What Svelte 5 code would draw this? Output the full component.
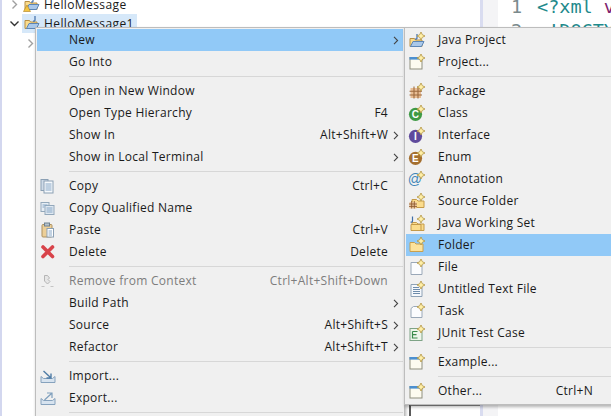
<script>
	const mainMenu = [
		{ label: 'New', arrow: true, active: true },
		{ label: 'Go Into' },
		{ sep: true },
		{ label: 'Open in New Window' },
		{ label: 'Open Type Hierarchy', key: 'F4' },
		{ label: 'Show In', key: 'Alt+Shift+W', arrow: true },
		{ label: 'Show in Local Terminal', arrow: true },
		{ sep: true },
		{ label: 'Copy', key: 'Ctrl+C', icon: 'copy' },
		{ label: 'Copy Qualified Name', icon: 'copyq' },
		{ label: 'Paste', key: 'Ctrl+V', icon: 'paste' },
		{ label: 'Delete', key: 'Delete', icon: 'delete' },
		{ sep: true },
		{ label: 'Remove from Context', key: 'Ctrl+Alt+Shift+Down', icon: 'remove', disabled: true },
		{ label: 'Build Path', arrow: true },
		{ label: 'Source', key: 'Alt+Shift+S', arrow: true },
		{ label: 'Refactor', key: 'Alt+Shift+T', arrow: true },
		{ sep: true },
		{ label: 'Import...', icon: 'import' },
		{ label: 'Export...', icon: 'export' },
		{ sep: true }
	];

	const newMenu = [
		{ label: 'Java Project', icon: 'javaproject' },
		{ label: 'Project...', icon: 'window' },
		{ sep: true },
		{ label: 'Package', icon: 'package' },
		{ label: 'Class', icon: 'class' },
		{ label: 'Interface', icon: 'interface' },
		{ label: 'Enum', icon: 'enum' },
		{ label: 'Annotation', icon: 'annotation' },
		{ label: 'Source Folder', icon: 'srcfolder' },
		{ label: 'Java Working Set', icon: 'workingset' },
		{ label: 'Folder', icon: 'folder', active: true },
		{ label: 'File', icon: 'file' },
		{ label: 'Untitled Text File', icon: 'text' },
		{ label: 'Task', icon: 'task' },
		{ label: 'JUnit Test Case', icon: 'junit' },
		{ sep: true },
		{ label: 'Example...', icon: 'window' },
		{ sep: true },
		{ label: 'Other...', key: 'Ctrl+N', icon: 'window' }
	];
</script>

{#snippet star()}
	<polygon points="12.5,0 13.8,2.7 16.5,4 13.8,5.3 12.5,8 11.2,5.3 8.5,4 11.2,2.7" fill="#fff0a8" stroke="#b3933f" stroke-width="0.8" />
{/snippet}

{#snippet folderShape(x, y)}
	<path d="M{x + 0.5} {y + 9.5} V{y + 1.5} H{x + 5} L{x + 6.5} {y + 3} H{x + 12.5} V{y + 9.5} Z" fill="#fbdc8c" stroke="#c49a4a" />
{/snippet}

{#snippet icon(name)}
	<svg class="ico" width="18" height="16" viewBox="0 0 17 16">
		{#if name === 'copy'}
			<rect x="1.5" y="1.5" width="7" height="11" fill="#cfdbe8" stroke="#8ba0b4" />
			<rect x="4.5" y="3" width="9" height="12" fill="#f6f9fc" stroke="#8ba0b4" />
			<path d="M6 6h6M6 8h6M6 10h6M6 12h6" stroke="#86a6c6" />
		{:else if name === 'copyq'}
			<rect x="1.5" y="2.5" width="8" height="9" fill="#e6edf4" stroke="#93a8bb" />
			<rect x="5.5" y="5.5" width="9" height="9" fill="#dfe8f1" stroke="#93a8bb" />
			<path d="M3 5h5M3 7h2M7 8h6M7 10h6M7 12h6" stroke="#86a6c6" />
		{:else if name === 'paste'}
			<rect x="2.5" y="2.5" width="10" height="12.5" rx="1" fill="#eccf98" stroke="#ad9160" />
			<rect x="5" y="1" width="5" height="3" fill="#b7c3cc" stroke="#6f8190" />
			<rect x="7.5" y="6.5" width="6.5" height="8.5" fill="#fff" stroke="#8ba0b4" />
			<path d="M9 9h3.5M9 11h3.5M9 13h3.5" stroke="#86a6c6" />
		{:else if name === 'delete'}
			<path d="M3.5 3 L13 12.5 M13 3 L3.5 12.5" stroke="#d8434a" stroke-width="3.6" stroke-linecap="round" />
		{:else if name === 'remove'}
			<path d="M5 2.5h3l2 2.5-1.5 1.5 2 2-2.5 2.5-3-3z" fill="#e6e6e6" stroke="#b5b5b5" />
			<path d="M2 13.5h3M11 13.5h3" stroke="#c4c4c4" />
		{:else if name === 'import' || name === 'export'}
			<path d="M1.5 8.5 V14.5 H15.5 V8.5 L13 10.5 H4 Z" fill="#d7e3ef" stroke="#86a2bd" />
			{#if name === 'import'}
				<path d="M4 3 L11 9.5 M11.5 5.5 V10 H7" fill="none" stroke="#4f7ca6" stroke-width="1.4" />
			{:else}
				<path d="M5 10 L12 3.5 M7.5 3 H12.5 V8" fill="none" stroke="#7f9fbd" stroke-width="1.2" />
			{/if}
		{:else if name === 'javaproject'}
			<path d="M1.5 14.5 V6.5 H6 L7 8 H13.5 V14.5 Z" fill="#fbdc8c" stroke="#b78f45" />
			<path d="M2 14.5 L4.5 9.5 H15.5 L13 14.5 Z" fill="#a9c8ea" stroke="#5d86b5" />
			<path d="M8.5 2 V6 Q8.5 7.5 6.5 7" fill="none" stroke="#3f6ea8" stroke-width="1.2" />
			{@render star()}
		{:else if name === 'window'}
			<rect x="1.5" y="3.5" width="12" height="11.5" fill="#fdfbf0" stroke="#8f8f7e" />
			<rect x="1" y="3" width="13" height="2.6" fill="#4b8fd0" />
			{@render star()}
		{:else if name === 'package'}
			<rect x="2" y="5" width="10.5" height="10" fill="#e8bd94" />
			<path d="M5.5 3.5V15.5M9.5 3.5V15.5M1 8.2H13.5M1 12H13.5" stroke="#9c6a3f" stroke-width="1.1" />
			{@render star()}
		{:else if name === 'class' || name === 'interface' || name === 'enum'}
			<circle cx="7" cy="9.3" r="6.6" fill={name === 'class' ? '#3f9a45' : name === 'interface' ? '#5f4a9c' : '#a56f2f'} />
			<text x="7" y="13" text-anchor="middle" font-size="10" font-weight="700" font-family="Liberation Sans, sans-serif" fill="#fff">{name === 'class' ? 'C' : name === 'interface' ? 'I' : 'E'}</text>
			{@render star()}
		{:else if name === 'annotation'}
			<text x="6.5" y="13" text-anchor="middle" font-size="14" font-family="Liberation Sans, sans-serif" fill="#3f86b8">@</text>
			{@render star()}
		{:else if name === 'srcfolder'}
			{@render folderShape(3, 5)}
			<rect x="1" y="9" width="7" height="6.5" fill="#ecc9a2" />
			<path d="M3.2 8V15.5M5.8 8V15.5M0.5 11H8.5M0.5 13.4H8.5" stroke="#8f5a2e" stroke-width="0.9" />
			{@render star()}
		{:else if name === 'workingset'}
			{@render folderShape(3, 6)}
			<path d="M4 1.5 V6 Q4 7.5 2 7" fill="none" stroke="#3f6ea8" stroke-width="1.2" />
			<path d="M2.5 15.5 V9.5 H12.5 V15.5 Z" fill="#fbdc8c" stroke="#c49a4a" />
			{@render star()}
		{:else if name === 'folder'}
			<path d="M1.5 14.5 V5.5 H6 L7.5 7 H14.5 V14.5 Z" fill="#fde29b" stroke="#c9a04e" />
			{@render star()}
		{:else if name === 'file' || name === 'task'}
			<path d={name === 'file' ? 'M2.5 3.5 H10.5 L13.5 6 V15.5 H2.5 Z' : 'M2.5 5.5 L5 3.5 H13.5 V14.5 H2.5 Z'} fill="#fbfcfe" stroke="#9aa8b8" />
			{@render star()}
		{:else if name === 'text'}
			<path d="M2.5 3.5 H10.5 L13.5 6 V15.5 H2.5 Z" fill="#f5f8fc" stroke="#8ea2b6" />
			<path d="M4.5 6.5h6M4.5 8.5h7M4.5 10.5h7M4.5 12.5h7" stroke="#6d8cab" />
			{@render star()}
		{:else if name === 'junit'}
			<rect x="1.5" y="3.5" width="12" height="12" fill="#eef5ea" stroke="#7ea386" />
			<path d="M4 6.5h5v0M4 6.5V13H9M4 9.7H8" fill="none" stroke="#3b8a4a" stroke-width="1.2" />
			{@render star()}
		{/if}
	</svg>
{/snippet}

{#snippet menuRows(items)}
	{#each items as it}
		{#if it.sep}
			<div class="sep"></div>
		{:else}
			<div class="row" class:active={it.active} class:disabled={it.disabled}>
				<span class="icon-cell">{#if it.icon}{@render icon(it.icon)}{/if}</span>
				<span class="label">{it.label}</span>
				<span class="key">{it.key ?? ''}</span>
				<span class="arrow-cell">
					{#if it.arrow}
						<svg width="6" height="9" viewBox="0 0 6 9"><path d="M1 0.8 L4.6 4.5 L1 8.2" fill="none" stroke="#444" stroke-width="1.1" /></svg>
					{/if}
				</span>
			</div>
		{/if}
	{/each}
{/snippet}

<div class="screen">
	<div class="tree">
		<div class="tree-row first">
			<svg class="chev" width="9" height="9" viewBox="0 0 9 9"><path d="M2.5 0.5 L6.5 4.5 L2.5 8.5" fill="none" stroke="#a0a0a0" stroke-width="1.4" /></svg>
			<svg class="prj" width="18" height="16" viewBox="0 0 17 16">
				<path d="M1.5 13.5 V5.5 H6 L7 7 H13.5 V13.5 Z" fill="#fbdc8c" stroke="#b78f45" />
				<path d="M3 13.5 L5.5 8.5 H15.5 L13 13.5 Z" fill="#a9c8ea" stroke="#5d86b5" />
				<path d="M9.5 1 V5 Q9.5 6.5 7.5 6" fill="none" stroke="#3f6ea8" stroke-width="1.2" />
				<path d="M3.5 9 L7 15.5 H0 Z" fill="#f4c542" stroke="#a9801f" stroke-width="0.6" />
			</svg>
			<span>HelloMessage</span>
		</div>
		<div class="tree-row">
			<svg class="chev" width="9" height="9" viewBox="0 0 9 9"><path d="M0.5 2.5 L4.5 6.5 L8.5 2.5" fill="none" stroke="#333" stroke-width="1.4" /></svg>
			<div class="selected">
				<svg class="prj" width="18" height="16" viewBox="0 0 17 16">
					<path d="M1.5 13.5 V5.5 H6 L7 7 H13.5 V13.5 Z" fill="#fbdc8c" stroke="#b78f45" />
					<path d="M3 13.5 L5.5 8.5 H15.5 L13 13.5 Z" fill="#a9c8ea" stroke="#5d86b5" />
					<path d="M11.5 1 V5 Q11.5 6.5 9.5 6" fill="none" stroke="#3f6ea8" stroke-width="1.2" />
				</svg>
				<span>HelloMessage1</span>
			</div>
		</div>
		<div class="tree-row child">
			<svg class="chev" width="9" height="9" viewBox="0 0 9 9"><path d="M2.5 0.5 L6.5 4.5 L2.5 8.5" fill="none" stroke="#a0a0a0" stroke-width="1.4" /></svg>
		</div>
	</div>
	<div class="gutter"></div>
	<div class="editor">
		<div class="code"><span class="ln">1</span><span class="tag">&lt;?xml</span> <span class="kw">v</span></div>
		<div class="code"><span class="ln">2</span><span class="tag">&lt;!DOCTY</span></div>
	</div>

	<div class="dialog-edge"></div>
	<div class="menu main-menu">{@render menuRows(mainMenu)}</div>
	<div class="menu sub-menu">{@render menuRows(newMenu)}</div>
</div>

<style>
	:global(body) { margin: 0; background: #fff; }

	.screen {
		position: relative;
		width: 611px;
		height: 416px;
		overflow: hidden;
		display: flex;
		background: #fff;
		font-family: "Open Sans", "Noto Sans", sans-serif;
		font-size: 12px;
		color: #1a1a1a;
	}

	.tree {
		width: 480px;
		border-left: 2px solid #d3d7ef;
		box-sizing: border-box;
		flex-shrink: 0;
	}
	.tree-row {
		display: flex;
		align-items: center;
		height: 18px;
		padding-left: 8px;
		gap: 3px;
		letter-spacing: 0.4px;
	}
	.tree-row.first { margin-top: -5px; margin-bottom: 1px; }
	.tree-row.child { height: 22px; padding-left: 24px; }
	.chev { flex-shrink: 0; }
	.prj { flex-shrink: 0; margin-left: 1px; }
	.selected {
		display: flex;
		align-items: center;
		gap: 3px;
		height: 19px;
		width: 115px;
		background: #d6e8f9;
	}

	.gutter { width: 3px; background: #d9dcf0; flex-shrink: 0; }

	.editor {
		flex: 1;
		padding-left: 28px;
		background: linear-gradient(to right, #f4f4f6 15px, #fff 15px);
		margin-top: -5px;
		font-family: "DejaVu Sans Mono", monospace;
		font-size: 18.5px;
	}
	.code { height: 24px; line-height: 24px; white-space: pre; }
	.ln { color: #7a8a8c; display: inline-block; width: 26px; }
	.tag { color: #1f8a8c; }
	.kw { color: #7f1f6f; }

	.dialog-edge {
		position: absolute;
		left: 409px;
		top: 404px;
		width: 71px;
		height: 12px;
		box-sizing: border-box;
		border-left: 2px solid #5a5a5a;
		border-top: 2px solid #8a8a8a;
	}

	.menu {
		position: absolute;
		top: 27px;
		background: #f0f0f0;
		border: 1px solid #bdbdbd;
		padding: 1px;
		box-sizing: border-box;
		box-shadow: 1px 2px 3px rgba(0, 0, 0, 0.3);
	}
	.main-menu {
		left: 35px;
		width: 370px;
		height: 400px;
	}
	.sub-menu {
		left: 404px;
		width: 212px;
		height: 378px;
	}

	.row {
		display: grid;
		grid-template-columns: 32px 1fr auto 15px;
		align-items: center;
		height: 22px;
		white-space: nowrap;
		letter-spacing: 0.27px;
	}
	.sub-menu .row { grid-template-columns: 32px 1fr auto 21px; }
	.row.active { background: #91c9f7; }
	.row.disabled { color: #7d7d7d; }

	.label, .key { padding-bottom: 2px; }

	.icon-cell { display: flex; padding-left: 2px; }
	.ico { display: block; }
	.arrow-cell { display: flex; justify-content: center; }

	.sep {
		height: 1px;
		background: #d7d7d7;
		margin: 3px 0 3px 32px;
	}
</style>
